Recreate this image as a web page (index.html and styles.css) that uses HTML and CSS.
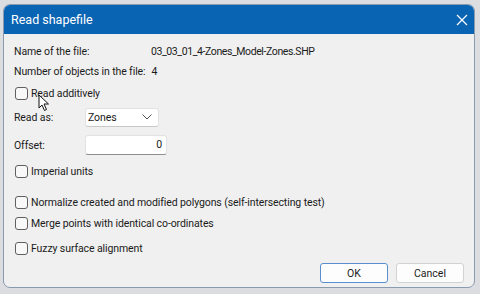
FILE: index.html
```html
<!DOCTYPE html>
<html lang="en">
<head>
    <meta charset="UTF-8">
    <title>Read shapefile</title>
    <link rel="stylesheet" href="styles.css">
</head>
<body>
    <div class="dialog">
        <div class="titlebar">
            <span class="title">Read shapefile</span>
            <svg class="close" width="12" height="12" viewBox="0 0 12 12">
                <path d="M1 1 L11 11 M11 1 L1 11" stroke="#ffffff" stroke-width="1.2" fill="none"/>
            </svg>
        </div>
        <div class="content">
            <div class="row row-name">
                <span class="label label-wide">Name of the file:</span>
                <span class="filename">03_03_01_4-Zones_Model-Zones.SHP</span>
            </div>
            <div class="row row-count">
                <span>Number of objects in the file:</span>
                <span class="count">4</span>
            </div>
            <label class="row check row-additive">
                <span class="box"></span>
                <span>Read additively</span>
            </label>
            <div class="row row-readas">
                <span class="label">Read as:</span>
                <div class="select">
                    <span>Zones</span>
                    <svg width="10" height="6" viewBox="0 0 10 6">
                        <path d="M0.5 0.5 L5 5 L9.5 0.5" stroke="#555" stroke-width="1" fill="none"/>
                    </svg>
                </div>
            </div>
            <div class="row row-offset">
                <span class="label">Offset:</span>
                <div class="input">0</div>
            </div>
            <label class="row check row-imperial">
                <span class="box"></span>
                <span>Imperial units</span>
            </label>
            <label class="row check row-normalize">
                <span class="box"></span>
                <span>Normalize created and modified polygons (self-intersecting test)</span>
            </label>
            <label class="row check row-merge">
                <span class="box"></span>
                <span>Merge points with identical co-ordinates</span>
            </label>
            <label class="row check row-fuzzy">
                <span class="box"></span>
                <span>Fuzzy surface alignment</span>
            </label>
            <div class="buttons">
                <button class="btn btn-default">OK</button>
                <button class="btn">Cancel</button>
            </div>
        </div>
        <svg class="cursor" width="12" height="18" viewBox="0 0 12 18">
            <path d="M1 1 L1 14 L4 11 L6.5 16.5 L8.5 15.5 L6 10 L10.5 10 Z" fill="#ffffff" stroke="#111" stroke-width="1"/>
        </svg>
    </div>
</body>
</html>
```

FILE: styles.css
```css
:root {
    --title-color: #0a64b4;
    --dialog-bg: #f0f0f0;
    --text-color: #1b1b1b;
}

body {
    margin: 0;
    width: 480px;
    height: 294px;
    overflow: hidden;
    background-color: #dcdde0;
    font-family: Roboto, 'Liberation Sans', sans-serif;
    font-size: 10.5px;
    letter-spacing: -0.1px;
    color: var(--text-color);
}

.dialog {
    position: relative;
    width: 472px;
    height: 284px;
    margin: 4px 0 0 3px;
    background-color: var(--dialog-bg);
    border: 1px solid #8a9bb0;
    border-radius: 7px;
    overflow: hidden;
    box-sizing: border-box;
}

.titlebar {
    height: 29px;
    background-color: var(--title-color);
    display: flex;
    align-items: center;
    justify-content: space-between;
    padding: 0 6px 0 7px;
    letter-spacing: 0;
}

.title {
    color: #ffffff;
    font-size: 12.5px;
}

.content {
    padding: 7px 0 0 10px;
}

.row {
    display: flex;
    align-items: center;
    height: 20px;
}

.label {
    width: 71px;
}

.label-wide {
    width: 137px;
}

.filename {
    letter-spacing: -0.4px;
}

.count {
    margin-left: 6px;
}

.row-count { margin-top: 0; }
.row-additive { margin-top: 2px; }
.row-readas { margin-top: 4px; }
.row-offset { margin-top: 8px; }
.row-imperial { margin-top: 6px; }
.row-normalize { margin-top: 11px; }
.row-merge { margin-top: 1px; }
.row-fuzzy { margin-top: 5px; }

.check .box {
    width: 11px;
    height: 11px;
    border: 1px solid #5f5f5f;
    border-radius: 3px;
    background-color: #f8f8f8;
    margin: 0 3px 0 1px;
}

.select {
    width: 74px;
    height: 19px;
    background-color: #ffffff;
    border: 1px solid #e2e2e2;
    border-bottom-color: #c8c8c8;
    border-radius: 3px;
    box-sizing: border-box;
    display: flex;
    align-items: center;
    justify-content: space-between;
    padding: 0 6px 0 2px;
}

.input {
    width: 82px;
    height: 20px;
    background-color: #ffffff;
    border: 1px solid #e2e2e2;
    border-bottom-color: #8d8d8d;
    border-radius: 3px;
    box-sizing: border-box;
    text-align: right;
    padding: 0 4px;
    line-height: 18px;
}

.buttons {
    display: flex;
    justify-content: flex-end;
    gap: 8px;
    margin-top: 5px;
    padding-right: 10px;
}

.btn {
    width: 68px;
    height: 20px;
    font-family: inherit;
    font-size: 10.5px;
    color: var(--text-color);
    background-color: #fdfdfd;
    border: 1px solid #d2d2d2;
    border-radius: 3px;
    padding: 0;
}

.btn-default {
    border: 1.5px solid #5a8fcf;
}

.cursor {
    position: absolute;
    left: 34px;
    top: 89px;
}
```
